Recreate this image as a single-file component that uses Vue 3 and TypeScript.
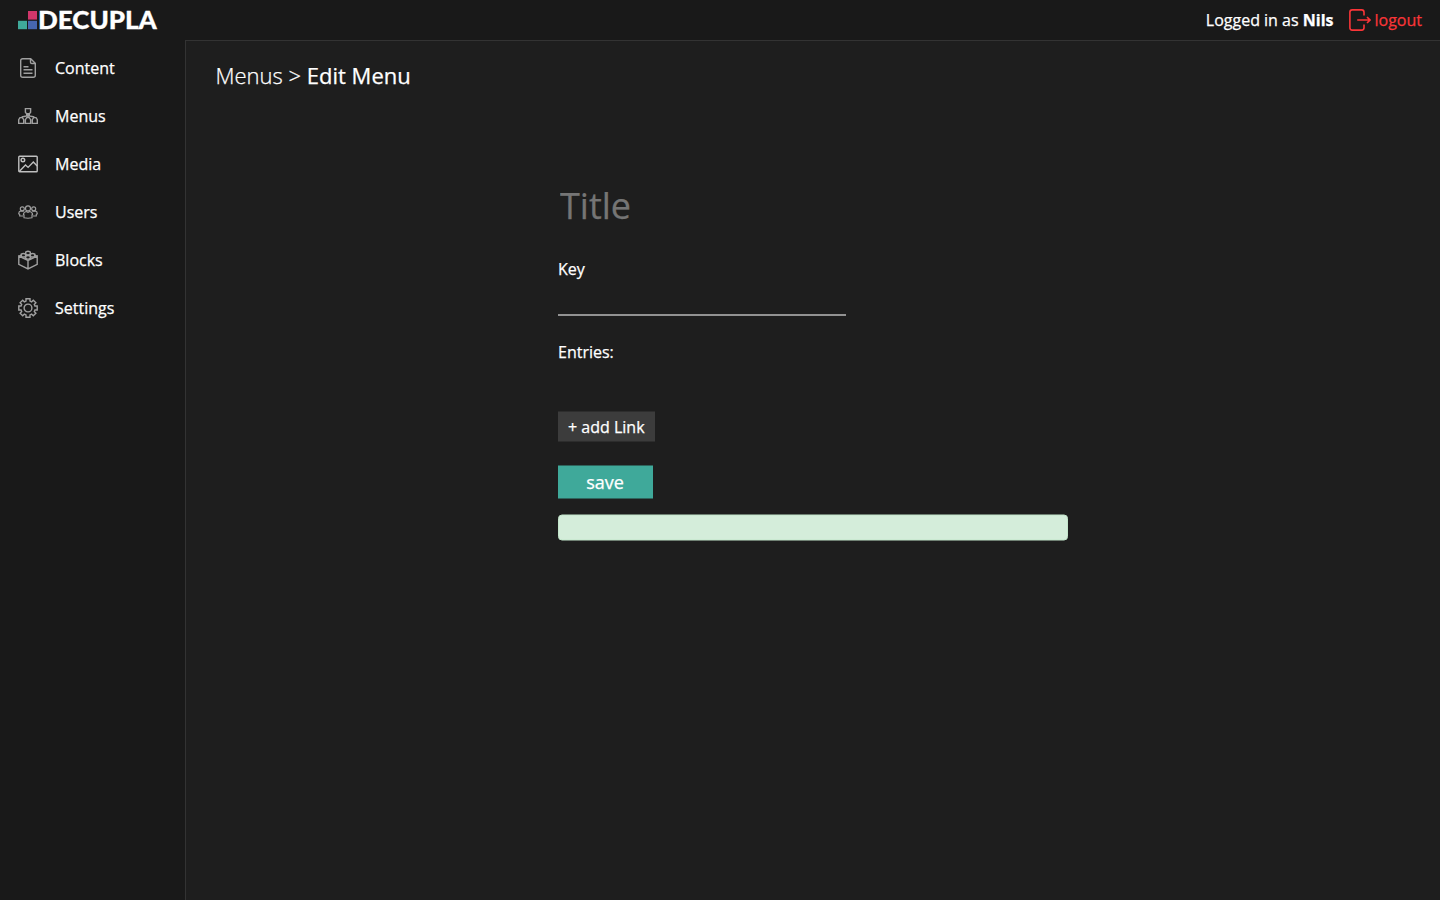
<script setup lang="ts">
interface NavItem {
  id: string
  label: string
}

const items: NavItem[] = [
  { id: 'content', label: 'Content' },
  { id: 'menus', label: 'Menus' },
  { id: 'media', label: 'Media' },
  { id: 'users', label: 'Users' },
  { id: 'blocks', label: 'Blocks' },
  { id: 'settings', label: 'Settings' },
]
</script>

<template>
  <div class="app">
    <header class="topbar">
      <svg class="logo" width="150" height="36" viewBox="0 -6 150 36">
        <rect x="0" y="12.8" width="9" height="8.4" fill="#3fa99a" />
        <rect x="10" y="3" width="9" height="8.6" fill="#d0366b" />
        <rect x="10" y="12.8" width="9" height="8.4" fill="#4666b0" />
        <text x="20" y="21" textLength="118.8" lengthAdjust="spacingAndGlyphs">DECUPLA</text>
      </svg>
      <div class="session">
        <span class="who">Logged in as <b>Nils</b></span>
        <a class="logout">
          <svg width="22" height="22" viewBox="0 0 22 22" fill="none" stroke="#fa3538" stroke-width="1.6">
            <path d="M15 6.5V3.2Q15 .9 12.7 .9H3.2Q.9 .9 .9 3.2V18.8Q.9 21.1 3.2 21.1H12.7Q15 21.1 15 18.8V15.5" />
            <path d="M8.2 11H21M18 8l3 3-3 3" />
          </svg>
          <span>logout</span>
        </a>
      </div>
    </header>
    <div class="body">
      <nav class="sidebar">
        <a v-for="item in items" :key="item.id" class="nav-item">
          <svg class="icon" width="20" height="20" viewBox="0 0 20 20">
            <template v-if="item.id === 'content'">
              <path d="M4.7.7h8l4.6 4.6v12q0 2-2 2H4.7q-2 0-2-2V2.7q0-2 2-2zM12.5.9v3.3q0 1.3 1.3 1.3h3.3" />
              <path d="M5.5 8.8h5M5.5 11.8h9M5.5 15.2h9" />
            </template>
            <template v-else-if="item.id === 'menus'">
              <path d="M7.4 2.6h5.2v3.6L11.4 7.8H8.6L7.4 6.2zM8.7 8v1.9L3.6 11M11.3 8v1.9l5.1 1.1M10 8v3.4" />
              <path d="M.7 17.4v-3.7l1.3-2.1h2.4l1.3 2.1v3.7zM7.4 17.4v-3.7l1.3-2.1h2.6l1.3 2.1v3.7zM14.3 17.4v-3.7l1.3-2.1H18l1.3 2.1v3.7z" />
            </template>
            <template v-else-if="item.id === 'media'">
              <g class="bright">
                <rect x=".8" y="2.2" width="18.4" height="15.6" rx=".8" />
                <circle cx="4.9" cy="6" r="1.8" />
                <path d="M1.5 17.2l6-6.2 2.6 2.4 5.2-5.3 3.9 4" />
              </g>
            </template>
            <template v-else-if="item.id === 'users'">
              <g class="fine">
                <circle cx="10" cy="6.4" r="2.5" />
                <path d="M5.4 12.5q.2-2.5 2.9-3l1.7.8 1.7-.8q2.7.5 2.9 3l-.6.4v2.9q-4 .9-8 0v-2.9z" />
                <circle cx="4.3" cy="6.8" r="2" />
                <circle cx="15.7" cy="6.8" r="2" />
                <path d="M5.4 14H1.7v-1.7l-1-.5q0-2.4 2-2.9l3.1.3M14.6 14h3.7v-1.7l1-.5q0-2.4-2-2.9l-3.1.3" />
              </g>
            </template>
            <template v-else-if="item.id === 'blocks'">
              <path d="M.8 6.2L10 10.5l9.2-4.3v8.1L10 18.9.8 14.3zM10 10.5v8.4M.8 6.2L4 4.8M19.2 6.2L16 4.8" />
              <path d="M7.7 2v2.1q2.3 1.5 4.6 0V2q-2.3-1.5-4.6 0zM3.2 4.2v2.1q2.2 1.5 4.4 0V4.2q-2.2-1.5-4.4 0zM12.4 4.2v2.1q2.2 1.5 4.4 0V4.2q-2.2-1.5-4.4 0zM7.7 6.4v2q2.3 1.5 4.6 0v-2q-2.3-1.5-4.6 0z" />
            </template>
            <template v-else>
              <path d="M8 .8h4v2.3l1.6.7 1.7-1.6 2.6 2.6-1.6 1.7.6 1.5h2.3v4h-2.3l-.6 1.5 1.6 1.7-2.6 2.6-1.7-1.6-1.6.7v2.3H8v-2.3l-1.6-.7-1.7 1.6-2.6-2.6 1.6-1.7-.6-1.5H.8V8h2.3l.6-1.5-1.6-1.7 2.6-2.6 1.7 1.6L8 3.1z" />
              <circle cx="10" cy="10" r="3.9" />
            </template>
          </svg>
          <span>{{ item.label }}</span>
        </a>
      </nav>
      <main class="main">
        <h1 class="crumbs">Menus &gt; <span>Edit Menu</span></h1>
        <form class="form" @submit.prevent>
          <input class="title" type="text" placeholder="Title" />
          <label class="label" for="key">Key</label>
          <input id="key" class="key" type="text" />
          <div class="label entries">Entries:</div>
          <button type="button" class="add">+ add Link</button>
          <button type="submit" class="save">save</button>
          <div class="notice"></div>
        </form>
      </main>
    </div>
  </div>
</template>

<style>
body {
  margin: 0;
  background: #191919;
}
</style>

<style scoped>
.app {
  height: 100vh;
  display: flex;
  flex-direction: column;
  overflow: hidden;
  background: #191919;
  color: #fff;
  font: 16px/24px "Open Sans", "Noto Sans", sans-serif;
  -webkit-text-stroke: 0.25px currentColor;
}
.topbar {
  height: 40px;
  flex: none;
  display: flex;
  align-items: center;
  justify-content: space-between;
  padding: 0 18px;
}
.logo text {
  font: 900 25.5px Lato, sans-serif;
  fill: #fff;
  stroke: #fff;
  stroke-width: 0.3px;
}
.session,
.logout {
  display: flex;
  align-items: center;
}
.session {
  gap: 15px;
}
.logout {
  gap: 4px;
  color: #fa3538;
}
.body {
  flex: 1;
  display: flex;
}
.sidebar {
  width: 185px;
  flex: none;
  padding-top: 4px;
  box-sizing: border-box;
}
.nav-item {
  height: 48px;
  display: flex;
  align-items: center;
  gap: 17px;
  padding-left: 18px;
}
.icon {
  fill: none;
  stroke: #a0a0a0;
  stroke-width: 1.4;
}
.bright {
  stroke: #c0c0c0;
}
.fine {
  stroke-width: 1.15;
}
.main {
  flex: 1;
  background: #1e1e1e;
  border-top: 1px solid #333;
  border-left: 1px solid #333;
}
.crumbs {
  margin: 18px 0 0 29.5px;
  font-size: 22px;
  line-height: 32px;
  font-weight: 300;
}
.crumbs span {
  font-weight: 400;
}
.form {
  width: 510px;
  margin: 82px 0 0 372px;
  display: flex;
  flex-direction: column;
  align-items: flex-start;
}
input {
  box-sizing: border-box;
  background: none;
  border: 0;
  outline: 0;
  color: #fff;
  font-family: inherit;
}
.title {
  width: 510px;
  height: 64px;
  padding: 0 2px;
  font-size: 36px;
}
.title::placeholder {
  color: #757575;
}
.label {
  line-height: 24px;
  margin-top: 20px;
}
.key {
  width: 288px;
  height: 35px;
  border-bottom: 2px solid #929292;
}
.entries {
  margin-top: 24px;
}
button {
  border: 0;
  padding: 0;
  color: #fff;
  font-family: inherit;
  -webkit-text-stroke: inherit;
}
.add,
.save,
.notice {
  transform: translateY(-0.5px);
}
.add {
  width: 96.6px;
  height: 30px;
  margin-top: 48px;
  background: #3c3c3c;
  font-size: 16px;
}
.save {
  width: 95px;
  height: 33px;
  margin-top: 24px;
  padding: 0 1px 2px 0;
  background: #3fa99a;
  font-size: 18px;
}
.notice {
  width: 510px;
  height: 26px;
  margin-top: 16px;
  box-sizing: border-box;
  border: 1px solid #c3e6cb;
  border-radius: 4px;
  background: #d4edda;
}
</style>
